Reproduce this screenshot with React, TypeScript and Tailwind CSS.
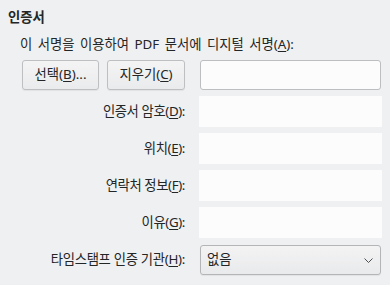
import React from "react";

function Mn({ children }: { children: React.ReactNode }) {
  return <span className="underline decoration-1 underline-offset-[2px]">{children}</span>;
}

const fields: { label: string; key: string }[] = [
  { label: "인증서 암호", key: "D" },
  { label: "위치", key: "E" },
  { label: "연락처 정보", key: "F" },
  { label: "이유", key: "G" },
];

export default function App() {
  return (
    <div className="h-[285px] w-[390px] bg-[#eff0f1] font-['Noto_Sans','Noto_Sans_CJK_KR',sans-serif] text-[13.33px] text-[#232627]">
      <div className="pl-2 pt-2 font-bold leading-[18px]">인증서</div>
      <div className="mt-[9px] pl-5 leading-[18px] [word-spacing:2px]">
        이 서명을 이용하여 PDF 문서에 디지털 서명(<Mn>A</Mn>):
      </div>

      <div className="mt-[7px] flex items-center">
        <button className="ml-[22px] h-[30px] w-[77px] rounded-[3px] border border-[#bdbfc1] bg-gradient-to-b from-[#f4f4f5] to-[#eaebec] leading-none shadow-[0_1px_1px_rgba(0,0,0,0.06)]">
          선택(<Mn>B</Mn>)...
        </button>
        <button className="ml-[8px] h-[30px] w-[78px] rounded-[3px] border border-[#bdbfc1] bg-gradient-to-b from-[#f4f4f5] to-[#eaebec] leading-none shadow-[0_1px_1px_rgba(0,0,0,0.06)]">
          지우기(<Mn>C</Mn>)
        </button>
        <div className="ml-[15px] h-[30px] w-[181px] rounded-[3px] border border-[#bcbebf] bg-[#fcfcfc]" />
      </div>

      {fields.map((f) => (
        <div key={f.key} className="mt-[6px] flex h-[31px] items-center">
          <div className="w-[186px] pr-[1px] text-right leading-none tracking-[-0.4px]">
            {f.label}(<Mn>{f.key}</Mn>):
          </div>
          <div className="ml-[13px] h-[31px] w-[183px] bg-[#fcfcfc]" />
        </div>
      ))}

      <div className="mt-[7px] flex h-[30px] items-center">
        <div className="w-[186px] pr-[1px] text-right leading-none tracking-[-0.3px]">
          타임스탬프 인증 기관(<Mn>H</Mn>):
        </div>
        <div className="ml-[14px] flex h-[30px] w-[181px] items-center justify-between rounded-[3px] border border-[#b3b5b7] bg-gradient-to-b from-[#f3f3f4] to-[#e9eaeb] pl-[6px] pr-[7px] shadow-[0_1px_1px_rgba(0,0,0,0.06)]">
          <span className="leading-none">없음</span>
          <svg width="9" height="5" viewBox="0 0 9 5" fill="none" stroke="#4d4f51" strokeWidth="1">
            <polyline points="0.5,0.5 4.5,4.5 8.5,0.5" />
          </svg>
        </div>
      </div>
    </div>
  );
}
